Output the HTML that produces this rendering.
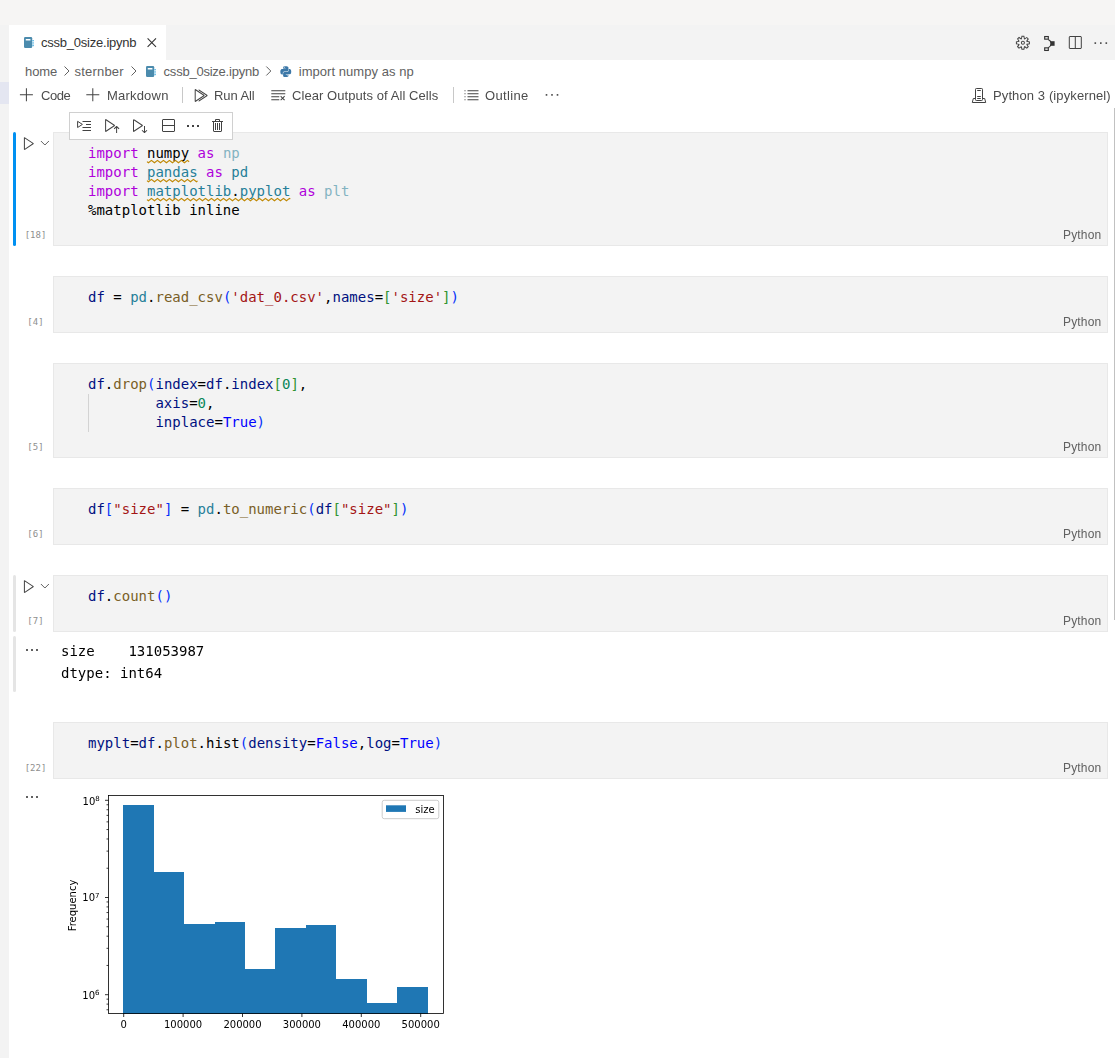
<!DOCTYPE html>
<html lang="en">
<head>
<meta charset="utf-8">
<title>cssb_0size.ipynb</title>
<style>
html,body{margin:0;padding:0;}
body{width:1115px;height:1058px;position:relative;overflow:hidden;background:#ffffff;
  font-family:"Liberation Sans","DejaVu Sans",sans-serif;font-size:13px;color:#4c4c4c;}
.abs{position:absolute;}
.ui{position:absolute;white-space:nowrap;line-height:16px;height:16px;font-size:13px;transform-origin:0 50%;}
.titlebar{left:0;top:0;width:1115px;height:25px;background:#f6f5f4;}
.tabbar{left:0;top:25px;width:1115px;height:35px;background:#f3f3f3;}
.leftstrip{left:0;top:25px;width:9px;height:1033px;background:#f3f3f3;}
.leftsel{left:0;top:82px;width:9px;height:22px;background:#e4e6f1;}
.tab{left:9px;top:25px;width:157px;height:35px;background:#ffffff;}
.cell{position:absolute;left:53px;width:1053px;background:#f3f3f3;border:1px solid #e8e8e8;}
.code{position:absolute;left:88px;font-family:"DejaVu Sans Mono","Liberation Mono",monospace;font-size:14px;line-height:19px;white-space:pre;color:#000;}
.out{position:absolute;left:61px;font-family:"DejaVu Sans Mono","Liberation Mono",monospace;font-size:14px;line-height:22px;white-space:pre;color:#000;}
.cnt{position:absolute;font-family:"DejaVu Sans Mono","Liberation Mono",monospace;font-size:9px;line-height:12px;color:#8e8e8e;white-space:pre;text-align:center;width:40px;left:15.5px;}
.lang{position:absolute;will-change:transform;left:1063px;letter-spacing:.16px;font-size:12px;line-height:14px;color:#616161;white-space:nowrap;transform-origin:0 50%;}
.k{color:#af00db}.m{color:#267f99}.v{color:#001080}.f{color:#795e26}.s{color:#a31515}.n{color:#098658}.b{color:#0000ff}
.p1{color:#0431fa}.p2{color:#319331}.fade{opacity:.55}
.sq{}
svg{position:absolute;overflow:visible;}
.g{will-change:transform;}
</style>
</head>
<body>
<div class="abs titlebar"></div>
<div class="abs tabbar"></div>
<div class="abs leftstrip"></div>
<div class="abs leftsel"></div>
<div class="abs tab"></div>

<!-- TAB -->
<div class="ui" id="t_tab" style="left:41px;top:35px;color:#333;letter-spacing:-0.23px;">cssb_0size.ipynb</div>

<!-- BREADCRUMBS -->
<div class="ui" id="t_b1" style="left:25px;top:64px;color:#616161;letter-spacing:-0.1px;">home</div>
<div class="ui" id="t_b2" style="left:74.6px;top:64px;color:#616161;letter-spacing:0.19px;">sternber</div>
<div class="ui" id="t_b3" style="left:163.6px;top:64px;color:#616161;letter-spacing:-0.23px;">cssb_0size.ipynb</div>
<div class="ui" id="t_b4" style="left:298.7px;top:64px;color:#616161;letter-spacing:0.05px;">import numpy as np</div>

<!-- TOOLBAR -->
<div class="ui g" id="t_code" style="left:40.5px;top:88px;letter-spacing:-0.45px;">Code</div>
<div class="ui g" id="t_md" style="left:106.5px;top:88px;letter-spacing:0.2px;">Markdown</div>
<div class="ui g" id="t_run" style="left:214px;top:88px;letter-spacing:-0.08px;">Run All</div>
<div class="ui g" id="t_clr" style="left:291.7px;top:88px;letter-spacing:0.07px;">Clear Outputs of All Cells</div>
<div class="ui g" id="t_out" style="left:485px;top:88px;letter-spacing:0.33px;">Outline</div>
<div class="ui g" id="t_ker" style="left:993px;top:88px;letter-spacing:0.11px;">Python 3 (ipykernel)</div>

<!-- CELLS -->
<div class="cell" style="top:132px;height:112px;"></div>
<div class="code" style="top:144px;"><span class="k">import</span> <span class="sq">numpy</span> <span class="k">as</span> <span class="m fade">np</span>
<span class="k">import</span> <span class="m sq">pandas</span> <span class="k">as</span> <span class="m">pd</span>
<span class="k">import</span> <span class="m sq">matplotlib</span>.<span class="m sq">pyplot</span> <span class="k">as</span> <span class="m fade">plt</span>
%matplotlib inline</div>
<div class="cnt" style="top:229px;">[18]</div>
<div class="lang" style="top:228px;">Python</div>

<div class="cell" style="top:276px;height:55px;"></div>
<div class="code" style="top:288px;"><span class="v">df</span> = <span class="m">pd</span>.<span class="f">read_csv</span><span class="p1">(</span><span class="s">'dat_0.csv'</span>,<span class="v">names</span>=<span class="p2">[</span><span class="s">'size'</span><span class="p2">]</span><span class="p1">)</span></div>
<div class="cnt" style="top:316px;">[4]</div>
<div class="lang" style="top:315px;">Python</div>

<div class="cell" style="top:363px;height:93px;"></div>
<div class="code" style="top:375px;"><span class="v">df</span>.<span class="f">drop</span><span class="p1">(</span><span class="v">index</span>=<span class="v">df</span>.<span class="v">index</span><span class="p2">[</span><span class="n">0</span><span class="p2">]</span>,
        <span class="v">axis</span>=<span class="n">0</span>,
        <span class="v">inplace</span>=<span class="b">True</span><span class="p1">)</span></div>
<div class="abs" style="left:88px;top:394px;width:1px;height:38px;background:#d3d3d3;"></div>
<div class="cnt" style="top:441px;">[5]</div>
<div class="lang" style="top:440px;">Python</div>

<div class="cell" style="top:488px;height:55px;"></div>
<div class="code" style="top:500px;"><span class="v">df</span><span class="p1">[</span><span class="s">"size"</span><span class="p1">]</span> = <span class="m">pd</span>.<span class="f">to_numeric</span><span class="p1">(</span><span class="v">df</span><span class="p2">[</span><span class="s">"size"</span><span class="p2">]</span><span class="p1">)</span></div>
<div class="cnt" style="top:528px;">[6]</div>
<div class="lang" style="top:527px;">Python</div>

<div class="cell" style="top:575px;height:55px;"></div>
<div class="code" style="top:587px;"><span class="v">df</span>.<span class="f">count</span><span class="p1">()</span></div>
<div class="cnt" style="top:615px;">[7]</div>
<div class="lang" style="top:614px;">Python</div>
<div class="out g" style="top:640px;">size    131053987
dtype: int64</div>

<div class="cell" style="top:722px;height:55px;"></div>
<div class="code" style="top:734px;"><span class="v">myplt</span>=<span class="v">df</span>.<span class="f">plot</span>.hist<span class="p1">(</span><span class="v">density</span>=<span class="b">False</span>,<span class="v">log</span>=<span class="b">True</span><span class="p1">)</span></div>
<div class="cnt" style="top:762px;">[22]</div>
<div class="lang" style="top:761px;">Python</div>

<!-- focus + hover bars -->
<div class="abs" style="left:13px;top:132px;width:3px;height:114px;background:#0090f1;border-radius:1.5px;"></div>
<div class="abs" style="left:13px;top:575px;width:3px;height:57px;background:#e5e5e5;border-radius:1.5px;"></div>
<div class="abs" style="left:13px;top:636px;width:3px;height:56px;background:#e5e5e5;border-radius:1.5px;"></div>
<!-- scrollbar -->
<div class="abs" style="left:1114px;top:108px;width:1px;height:512px;background:#c1c1c1;"></div>

<!-- CELL TOOLBAR -->
<div class="abs" style="left:69px;top:112px;width:162px;height:26px;background:#fff;border:1px solid #d0d0d0;"></div>

<!-- CHART -->
<svg id="chart" class="g" style="left:0;top:0;" width="1115" height="1058" viewBox="0 0 1115 1058" font-family="'DejaVu Sans','Liberation Sans',sans-serif" font-size="10" fill="#000">
<path d="M123 1013.5V805H154V872H184V924H215V922H245V969H275V928H306V925H336V979H367V1003H397V987H428V1013.5Z" fill="#1f77b4" shape-rendering="crispEdges"/>
<rect x="108.5" y="795.5" width="335.0" height="218.0" fill="none" stroke="#000" stroke-width="0.8"/>
<path d="M123.70 1013.5v3.5M183.10 1013.5v3.5M242.50 1013.5v3.5M301.90 1013.5v3.5M361.30 1013.5v3.5M420.70 1013.5v3.5M108.5 994.70h-3.5M108.5 897.50h-3.5M108.5 800.30h-3.5" stroke="#000" stroke-width="0.8" fill="none"/>
<path d="M108.5 1009.76h-2M108.5 1004.12h-2M108.5 999.15h-2M108.5 965.44h-2M108.5 948.32h-2M108.5 936.18h-2M108.5 926.76h-2M108.5 919.06h-2M108.5 912.56h-2M108.5 906.92h-2M108.5 901.95h-2M108.5 868.24h-2M108.5 851.12h-2M108.5 838.98h-2M108.5 829.56h-2M108.5 821.86h-2M108.5 815.36h-2M108.5 809.72h-2M108.5 804.75h-2" stroke="#000" stroke-width="0.75" fill="none"/>
<text x="123.70" y="1028.1" text-anchor="middle">0</text>
<text x="183.10" y="1028.1" text-anchor="middle">100000</text>
<text x="242.50" y="1028.1" text-anchor="middle">200000</text>
<text x="301.90" y="1028.1" text-anchor="middle">300000</text>
<text x="361.30" y="1028.1" text-anchor="middle">400000</text>
<text x="420.70" y="1028.1" text-anchor="middle">500000</text>
<text x="99.5" y="998.50" text-anchor="end">10<tspan font-size="7" dy="-3.8">6</tspan></text>
<text x="99.5" y="901.30" text-anchor="end">10<tspan font-size="7" dy="-3.8">7</tspan></text>
<text x="99.8" y="804.80" text-anchor="end">10<tspan font-size="7" dy="-3.8">8</tspan></text>
<text transform="translate(76.3 905.5) rotate(-90)" text-anchor="middle">Frequency</text>
<rect x="382.2" y="800.3" width="56.6" height="18.4" rx="2" fill="#fff" fill-opacity="0.8" stroke="#ccc" stroke-width="1"/>
<rect x="386" y="805.3" width="20" height="6.6" fill="#1f77b4"/>
<text x="415.2" y="813.2">size</text>
</svg>
<!-- ICONS -->
<svg id="icons" style="left:0;top:0;" width="1115" height="1058" viewBox="0 0 1115 1058" fill="#424242">
<defs>
<g id="nbicon"><rect x="0" y="0" width="8.200" height="11" rx="1.2" fill="#4b8bad"/><rect x="1.7" y="2" width="4.8" height="1.5" rx=".5" fill="#fff"/><rect x="8.200" y="3" width="1.800" height="1.3" fill="#6fc0e8"/><rect x="8.200" y="5.300" width="1.800" height="1.3" fill="#6fc0e8"/><rect x="8.200" y="7.600" width="1.800" height="1.6" fill="#6fc0e8"/></g>
<path id="chev" d="M0 0l4.5 4.5L0 9" fill="none" stroke="#616161" stroke-width="1"/>
<path id="plus" d="M14 7v1H8v6H7V8H1V7h6V1h1v6h6z"/>
<path id="play" d="M3.78 2L3 2.41v12l.78.42 9-6V8l-9-6zM4 13.48V3.35l7.6 5.07L4 13.48z"/>
<path id="cdown" d="M0 0l4 4 4-4" fill="none" stroke="#616161" stroke-width="1"/>
<g id="dots2"><rect x="0" y="0" width="2" height="2"/><rect x="5" y="0" width="2" height="2"/><rect x="10" y="0" width="2" height="2"/></g>
</defs>
<!-- tab -->
<use href="#nbicon" x="24" y="37"/>
<path d="M147.6 38.4l8.4 8.4M156 38.4l-8.4 8.4" stroke="#333" stroke-width="1.1" fill="none"/>
<!-- tab actions -->
<path transform="translate(1014.9 34.8)" d="M9.1 4.4L8.6 2H7.4l-.5 2.4-.7.3-2-1.3-.9.8 1.3 2-.2.7-2.4.5v1.2l2.4.5.3.8-1.3 2 .8.8 2-1.3.8.3.4 2.3h1.2l.5-2.4.8-.3 2 1.3.8-.8-1.3-2 .3-.8 2.3-.4V7.4l-2.4-.5-.3-.8 1.3-2-.8-.8-2 1.3-.7-.2zM9.4 1l.5 2.4L12 2.1l2 2-1.4 2.1 2.4.4v2.8l-2.4.5L14 12l-2 2-2.1-1.4-.5 2.4H6.6l-.5-2.4L4 13.9l-2-2 1.4-2.1L1 9.4V6.6l2.4-.5L2.1 4l2-2 2.1 1.4.4-2.4h2.8zm.6 7c0 1.1-.9 2-2 2s-2-.9-2-2 .9-2 2-2 2 .9 2 2zM8 9c.6 0 1-.4 1-1s-.4-1-1-1-1 .4-1 1 .4 1 1 1z"/>
<g fill="none" stroke="#333" stroke-width="1.150"><rect x="1044.700" y="36.550" width="3.600" height="2.600"/><rect x="1044.700" y="47.850" width="3.600" height="2.600"/><path d="M1048.3 39.4q2.6 1.3 3 4.1M1048.3 47.7q2.6 -1.3 3 -4.1"/></g>
<rect x="1050.4" y="41.2" width="4.2" height="4.6" fill="#333"/>
<path transform="translate(1066.800 35)" d="M14 1H3L2 2v11l1 1h11l1-1V2l-1-1zM8 13H3V2h5v11zm6 0H9V2h5v11z"/>
<g><rect x="1094.5" y="42.3" width="1.6" height="1.6"/><rect x="1100" y="42.3" width="1.6" height="1.6"/><rect x="1105.5" y="42.3" width="1.6" height="1.6"/></g>
<!-- breadcrumbs -->
<use href="#chev" x="64.5" y="66.5"/>
<use href="#chev" x="131.5" y="66.5"/>
<use href="#chev" x="266.3" y="66.5"/>
<use href="#nbicon" x="146" y="66" transform="translate(0 0)"/>
<g transform="translate(280.3 66.3) scale(0.685)"><path fill="#3c78a8" d="M7.9 0C3.9 0 4.2 1.7 4.2 1.7v1.8H8v.6H2.6S0 3.800 0 7.900s2.300 3.900 2.300 3.900h1.400V9.900s-.1-2.300 2.200-2.300h3.800s2.200 0 2.200-2.100V2.100S12.200 0 7.900 0zM5.800 1.200a.7.700 0 1 1 0 1.400.7.700 0 0 1 0-1.400z"/><path fill="#3c78a8" d="M8.100 15.800c4 0 3.700-1.700 3.700-1.700v-1.800H8v-.6h5.400s2.600.3 2.600-3.800-2.300-3.900-2.300-3.900h-1.400v1.900s.1 2.300-2.200 2.300H6.300s-2.200 0-2.200 2.100v3.400s-.3 2.100 4 2.100zm2.100-1.200a.7.700 0 1 1 0-1.400.7.700 0 0 1 0 1.400z"/></g>
<!-- notebook toolbar -->
<use href="#plus" x="18.9" y="87.2"/>
<use href="#plus" x="85.3" y="87.2"/>
<rect x="182" y="87" width="1" height="16" fill="#c8c8c8"/>
<g transform="translate(192.7 87.1)"><path d="M2.78 2L2 2.41v12l.78.42 9-6V8l-9-6zM3 13.48V3.35l7.600 5.070L3 13.480z"/><path d="M6 14.683l8.780-5.853V8L6 2.147V3.350l7.600 5.070L6 13.480v1.203z"/></g>
<path transform="translate(270.3 87.2)" d="M10 12.600l.7.700 1.600-1.600 1.600 1.600.8-.7L13 11l1.700-1.600-.8-.8-1.600 1.700-1.600-1.700-.7.800 1.600 1.600-1.600 1.600zM1 4h14V3H1v1zm0 3h14V6H1v1zm8 2.500V9H1v1h8v-.5zM9 13v-1H1v1h8z"/>
<rect x="453" y="87" width="1" height="16" fill="#c8c8c8"/>
<path transform="translate(463.5 87.3)" d="M2 3H1v1h1V3zm0 3H1v1h1V6zM1 9h1v1H1V9zm1 3H1v1h1v-1zm2-9h11v1H4V3zm11 3H4v1h11V6zM4 9h11v1H4V9zm11 3H4v1h11v-1z"/>
<g><rect x="545.7" y="94.100" width="1.600" height="1.600"/><rect x="551.2" y="94.100" width="1.600" height="1.600"/><rect x="556.700" y="94.100" width="1.600" height="1.600"/></g>
<!-- kernel -->
<g fill="none" stroke="#424242" stroke-width="1" stroke-linejoin="round"><rect x="975.500" y="88.500" width="7" height="12" rx=".8"/><path d="M977.200 90.500h3.600M977.200 96.500h3.600M977.200 98.500h3.600M975.500 98.500h-2.200l-1 4h13.400l-1-4h-2.200"/></g>
<!-- cell toolbar icons -->
<g fill="none" stroke="#424242" stroke-width="1"><path d="M77.6 121.300v6.200l4.800-3.100zM82.500 121.500h8.500M86 124.500h5M82.500 127.500h8.500M82.500 130.500h8.500"/></g>
<path transform="translate(104.100 118.100)" d="M1.770 1.010L1 1.420v12l.78.420 9-6v-.83l-9-6-.01-.01zM2 12.490V2.360l7.600 5.070L2 12.490zM12.150 8h.710l2.500 2.500-.71.710L13 9.560V15h-1V9.550l-1.650 1.650-.7-.7L12.150 8z"/>
<path transform="translate(132 118.100)" d="M1.800 1.010L1 1.420v12l.78.420 9-6v-.83l-9-6 .02-.01zM2 12.490V2.360l7.600 5.070L2 12.490zM12.850 15h-.710l-2.500-2.500.71-.71L12 13.440V8h1v5.450l1.650-1.650.7.700L12.850 15z"/>
<path transform="translate(160 118)" d="M14 1H3L2 2v11l1 1h11l1-1V2l-1-1zM14 13H3V8h11v5zm0-6H3V2h11v5z"/>
<g><rect x="187" y="125" width="2" height="2"/><rect x="192" y="125" width="2" height="2"/><rect x="197" y="125" width="2" height="2"/></g>
<path transform="translate(210 118.100)" d="M10 3h3v1h-1v9l-1 1H4l-1-1V4H2V3h3V2a1 1 0 0 1 1-1h3a1 1 0 0 1 1 1v1zM9 2H6v1h3V2zM4 13h7V4H4v9zm2-8H5v7h1V5zm1 0h1v7H7V5zm2 0h1v7H9V5z"/>
<!-- squiggles -->
<path d="M147.00 161.64L148.45 162.80L151.45 160.40L154.45 162.80L157.45 160.40L160.45 162.80L163.45 160.40L166.45 162.80L169.45 160.40L172.45 162.80L175.45 160.40L178.45 162.80L181.45 160.40L184.45 162.80L187.45 160.40L189.14 161.75M147.00 180.64L148.45 181.80L151.45 179.40L154.45 181.80L157.45 179.40L160.45 181.80L163.45 179.40L166.45 181.80L169.45 179.40L172.45 181.80L175.45 179.40L178.45 181.80L181.45 179.40L184.45 181.80L187.45 179.40L190.45 181.80L193.45 179.40L196.45 181.80L197.57 180.90M147.00 199.64L148.45 200.80L151.45 198.40L154.45 200.80L157.45 198.40L160.45 200.80L163.45 198.40L166.45 200.80L169.45 198.40L172.45 200.80L175.45 198.40L178.45 200.80L181.45 198.40L184.45 200.80L187.45 198.40L190.45 200.80L193.45 198.40L196.45 200.80L199.45 198.40L202.45 200.80L205.45 198.40L208.45 200.80L211.45 198.40L214.45 200.80L217.45 198.40L220.45 200.80L223.45 198.40L226.45 200.80L229.45 198.40L232.45 200.80L235.45 198.40L238.45 200.80L241.45 198.40L244.45 200.80L247.45 198.40L250.45 200.80L253.45 198.40L256.45 200.80L259.45 198.40L262.45 200.80L265.45 198.40L268.45 200.80L271.45 198.40L274.45 200.80L277.45 198.40L280.45 200.80L283.45 198.40L286.45 200.80L289.45 198.40L290.29 199.07" fill="none" stroke="#bf8803" stroke-width="1.15" stroke-linejoin="round"/>
<!-- cell run buttons -->
<use href="#play" x="20.900" y="135.200"/>
<use href="#cdown" x="40.900" y="141"/>
<use href="#play" x="20.900" y="578.200"/>
<use href="#cdown" x="40.900" y="584"/>
<use href="#dots2" x="26" y="649" fill="#616161"/>
<use href="#dots2" x="26" y="796" fill="#616161"/>
</svg>
</body>
</html>
